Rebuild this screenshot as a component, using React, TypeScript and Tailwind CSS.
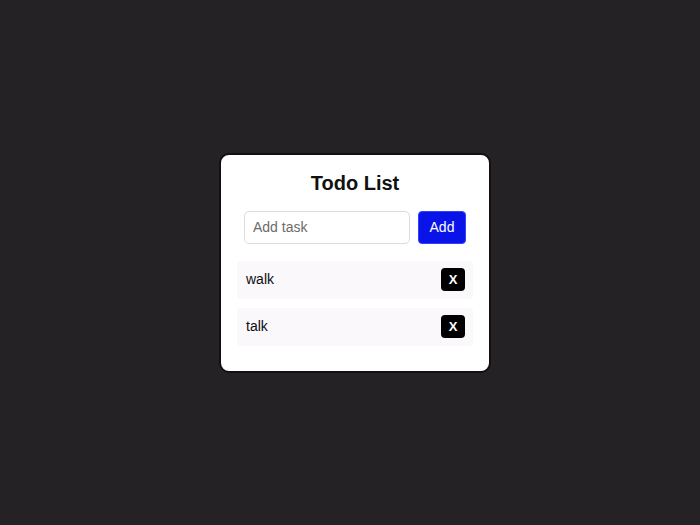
import { useState } from "react";

export default function App() {
    const [tasks, setTasks] = useState<string[]>(["walk", "talk"]);
    const [text, setText] = useState("");

    const add = () => {
        if (!text.trim()) return;
        setTasks([...tasks, text.trim()]);
        setText("");
    };

    return (
        <main className="min-h-screen bg-[#252226] flex items-center justify-center pl-[10px] font-['Liberation_Sans',Arial,sans-serif]">
            <div className="w-[272px] h-[220px] bg-white border-2 border-[#140d11] rounded-[10px] px-4 pt-[14px]">
                <h1 className="text-[20px] leading-[28px] font-bold text-center text-[#111]">Todo List</h1>
                <div className="flex justify-center gap-2 mt-[14px]">
                    <input
                        value={text}
                        onChange={(e) => setText(e.target.value)}
                        placeholder="Add task"
                        className="w-[166px] h-[33px] px-2 text-[14px] border border-[#dcdcdc] rounded-[5px] placeholder:text-[#6b6b6b] outline-none"
                    />
                    <button
                        onClick={add}
                        className="w-[48px] h-[33px] bg-[#0a14e8] text-white text-[14px] rounded-[4px] border border-[#3040ff]"
                    >
                        Add
                    </button>
                </div>
                <ul className="mt-[17px] space-y-[9px]">
                    {tasks.map((t, i) => (
                        <li
                            key={i}
                            className="h-[38px] flex items-center justify-between pl-[9px] pr-2 bg-[#faf8fb] rounded-[4px]"
                        >
                            <span className="text-[14px] text-[#0d0b14]">{t}</span>
                            <button
                                onClick={() => setTasks(tasks.filter((_, j) => j !== i))}
                                className="w-[24px] h-[23px] bg-black text-white text-[13px] font-bold rounded-[4px] flex items-center justify-center"
                            >
                                X
                            </button>
                        </li>
                    ))}
                </ul>
            </div>
        </main>
    );
}
